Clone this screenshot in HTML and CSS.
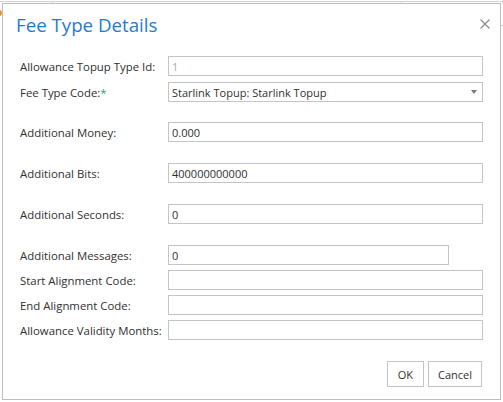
FILE: index.html
```html
<!doctype html>
<html>
<head>
<meta charset="utf-8">
<title>Fee Type Details</title>
<link rel="stylesheet" href="styles.css">
</head>
<body>
	<div class="page">
		<div class="page-grid">
			<span class="cell cell1"></span>
			<span class="cell cell2"></span>
			<span class="cell cell3"></span>
		</div>
		<span class="page-dot"></span>
		<span class="page-tick"></span>
	</div>

	<div class="modal">
		<div class="modal-header">
			<h4 class="modal-title">Fee Type Details</h4>
			<a href="javascript:;" class="close">
				<svg width="10" height="10" viewBox="0 0 10 10"><path d="M0.5 0.5L9.5 9.5M9.5 0.5L0.5 9.5" stroke="#8a8a8a" stroke-width="1.2" fill="none"/></svg>
			</a>
		</div>
		<div class="modal-body">
			<div class="form-row">
				<label>Allowance Topup Type Id:</label>
				<input type="text" class="field" value="1" disabled>
			</div>
			<div class="form-row row2">
				<label>Fee Type Code:<span class="req">*</span></label>
				<div class="field select"><span>Starlink Topup: Starlink Topup</span><i class="caret"></i></div>
			</div>
			<div class="form-row spaced first">
				<label>Additional Money:</label>
				<input type="text" class="field" value="0.000">
			</div>
			<div class="form-row spaced">
				<label>Additional Bits:</label>
				<input type="text" class="field" value="400000000000">
			</div>
			<div class="form-row spaced">
				<label>Additional Seconds:</label>
				<input type="text" class="field" value="0">
			</div>
			<div class="form-row spaced">
				<label>Additional Messages:</label>
				<input type="text" class="field short" value="0">
			</div>
			<div class="form-row">
				<label>Start Alignment Code:</label>
				<input type="text" class="field" value="">
			</div>
			<div class="form-row">
				<label>End Alignment Code:</label>
				<input type="text" class="field" value="">
			</div>
			<div class="form-row">
				<label>Allowance Validity Months:</label>
				<input type="text" class="field" value="">
			</div>
		</div>
		<div class="modal-footer">
			<button class="btn btn-ok">OK</button>
			<button class="btn">Cancel</button>
		</div>
	</div>
</body>
</html>
```

FILE: styles.css
```css
html,body{ margin:0; padding:0; background:#fff;}
body{ width:503px; height:402px; overflow:hidden; font-family:"Open Sans","Noto Sans",sans-serif; color:#333;}

/* page behind the dialog */
.page{ position:relative; height:402px;}
.page-grid{ display:flex; margin-top:1px; border-top:1px solid #d2d2d2; height:2px;}
.page-grid .cell{ border-right:1px solid #d2d2d2;}
.cell1{ width:52px;} .cell2{ width:348px;} .cell3{ flex:1; border-right:none;}
.page-dot{ position:absolute; left:-4px; top:9px; width:6px; height:6px; border-radius:50%; background:#e8902c;}
.page-tick{ position:absolute; right:0; top:24px; width:3px; height:1px; background:#c8c8c8;}

/* dialog */
.modal{ position:absolute; left:2px; top:3px; width:499px; height:397px; box-sizing:border-box; border:1px solid #bdbdbd; background:#fff;}
.modal-header{ display:flex; justify-content:space-between; align-items:flex-start; height:44px; box-sizing:border-box; padding:7px 10px 0 13px;}
.modal-title{ margin:0; font-size:18.7px; line-height:28px; font-weight:normal; color:#1f7bcf;}
.close{ display:block; width:10px; height:10px; margin-top:8px; line-height:0;}

.modal-body{ padding:8px 0 0 17px;}
.form-row{ display:flex; align-items:center; height:20px; margin-top:5px;}
.form-row:first-child{ margin-top:0;}
.form-row.row2{ margin-top:6px;}
.form-row.spaced{ margin-top:21px;}
.form-row.spaced.first{ margin-top:20px;}
.form-row label{ width:148px; flex:none; font-size:11.4px; color:#303030;}
.req{ color:#2a9a8c;}

.field{ width:315px; height:20px; box-sizing:border-box; margin:0; border:1px solid #c4c4c4; padding:0 3px; font-family:"Open Sans","Noto Sans",sans-serif; font-size:11px; color:#303030; background:#fff; outline:none;}
.field.short{ width:281px;}
.field:disabled{ color:#aaa; background:#fff;}
.select{ display:flex; align-items:center; justify-content:space-between; padding-right:5px;}
.caret{ width:0; height:0; border-left:3px solid transparent; border-right:3px solid transparent; border-top:4px solid #7a7a7a;}

.modal-footer{ display:flex; justify-content:flex-end; gap:4px; padding:21px 18px 0 0;}
.btn{ height:26px; margin:0; padding:0 9px; border:1px solid #c4c4c4; background:#fff; font-family:"Open Sans","Noto Sans",sans-serif; font-size:11px; color:#303030; cursor:pointer;}
.btn-ok{ padding:0 10px;}
```
